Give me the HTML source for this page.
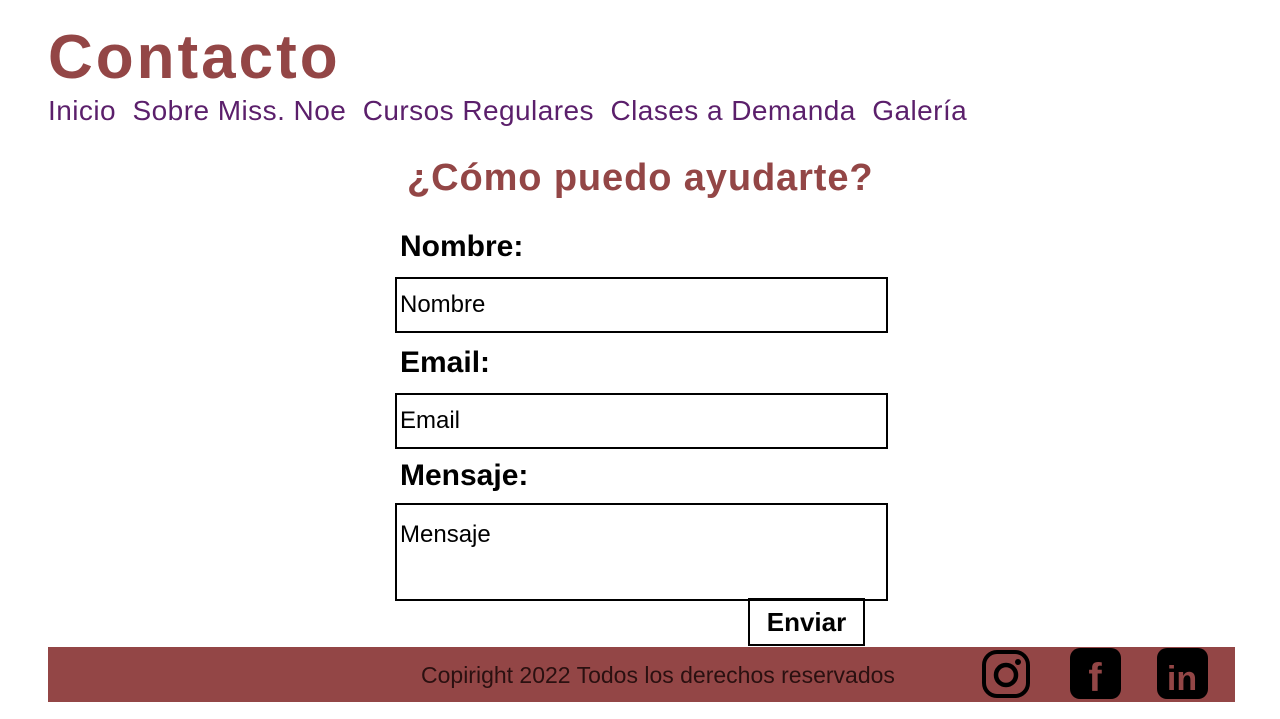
<!DOCTYPE html>
<html><head><meta charset="utf-8"><style>
body{margin:0;width:1280px;height:719px;background:#fff;font-family:"Liberation Sans",sans-serif;position:relative;overflow:hidden}
.a{position:absolute;white-space:nowrap}
h1{position:absolute;left:48px;top:22px;margin:0;font-size:62px;font-weight:bold;color:#934646;letter-spacing:3px}
.nav{left:48px;top:95px;font-size:28px;color:#5b1f6b;letter-spacing:0.45px}
.h2{left:407px;top:157px;font-size:38px;font-weight:bold;color:#934646;letter-spacing:0.9px}
.lbl{left:400px;font-size:30px;font-weight:bold;color:#000}
.box{position:absolute;left:395px;width:489px;border:2.5px solid #000;box-sizing:content-box}
.box span{position:absolute;left:3px;font-size:24px;color:#000}
.btn{position:absolute;left:748px;top:598px;width:113px;height:44px;border:2.5px solid #000;font-size:26px;font-weight:bold;text-align:center;line-height:44px}
.foot{position:absolute;left:48px;top:647px;width:1187px;height:55px;background:#934646}
</style></head><body>
<h1>Contacto</h1>
<div class="a nav">Inicio&nbsp; Sobre Miss. Noe&nbsp; Cursos Regulares&nbsp; Clases a Demanda&nbsp; Galería</div>
<div class="a h2">¿Cómo puedo ayudarte?</div>
<div class="a lbl" style="top:230px">Nombre:</div>
<div class="box" style="top:277px;height:52px"><span style="top:12px">Nombre</span></div>
<div class="a lbl" style="top:346px">Email:</div>
<div class="box" style="top:393px;height:52px"><span style="top:12px">Email</span></div>
<div class="a lbl" style="top:459px">Mensaje:</div>
<div class="box" style="top:503px;height:94px"><span style="top:16px">Mensaje</span></div>
<div class="btn">Enviar</div>
<div class="foot">
<div class="a" style="left:373px;top:15px;font-size:23px;color:#2a1010">Copiright 2022 Todos los derechos reservados</div>
<svg class="a" style="left:933px;top:2px" width="50" height="50" viewBox="0 0 50 50"><rect x="3" y="3" width="44" height="44" rx="13" fill="none" stroke="#000" stroke-width="4"/><circle cx="25" cy="26" r="10" fill="none" stroke="#000" stroke-width="4.5"/><circle cx="37" cy="13" r="3" fill="#000"/></svg>
<svg class="a" style="left:1022px;top:1px" width="51" height="51" viewBox="0 0 51 51"><rect x="0" y="0" width="51" height="51" rx="10" fill="#000"/><text x="25" y="43" font-family="Liberation Sans" font-weight="bold" font-size="40" fill="#934646" text-anchor="middle">f</text></svg>
<svg class="a" style="left:1109px;top:1px" width="51" height="51" viewBox="0 0 51 51"><rect x="0" y="0" width="51" height="51" rx="10" fill="#000"/><text x="25" y="42" font-family="Liberation Sans" font-weight="bold" font-size="34" fill="#934646" text-anchor="middle">in</text></svg>
</div>
</body></html>
